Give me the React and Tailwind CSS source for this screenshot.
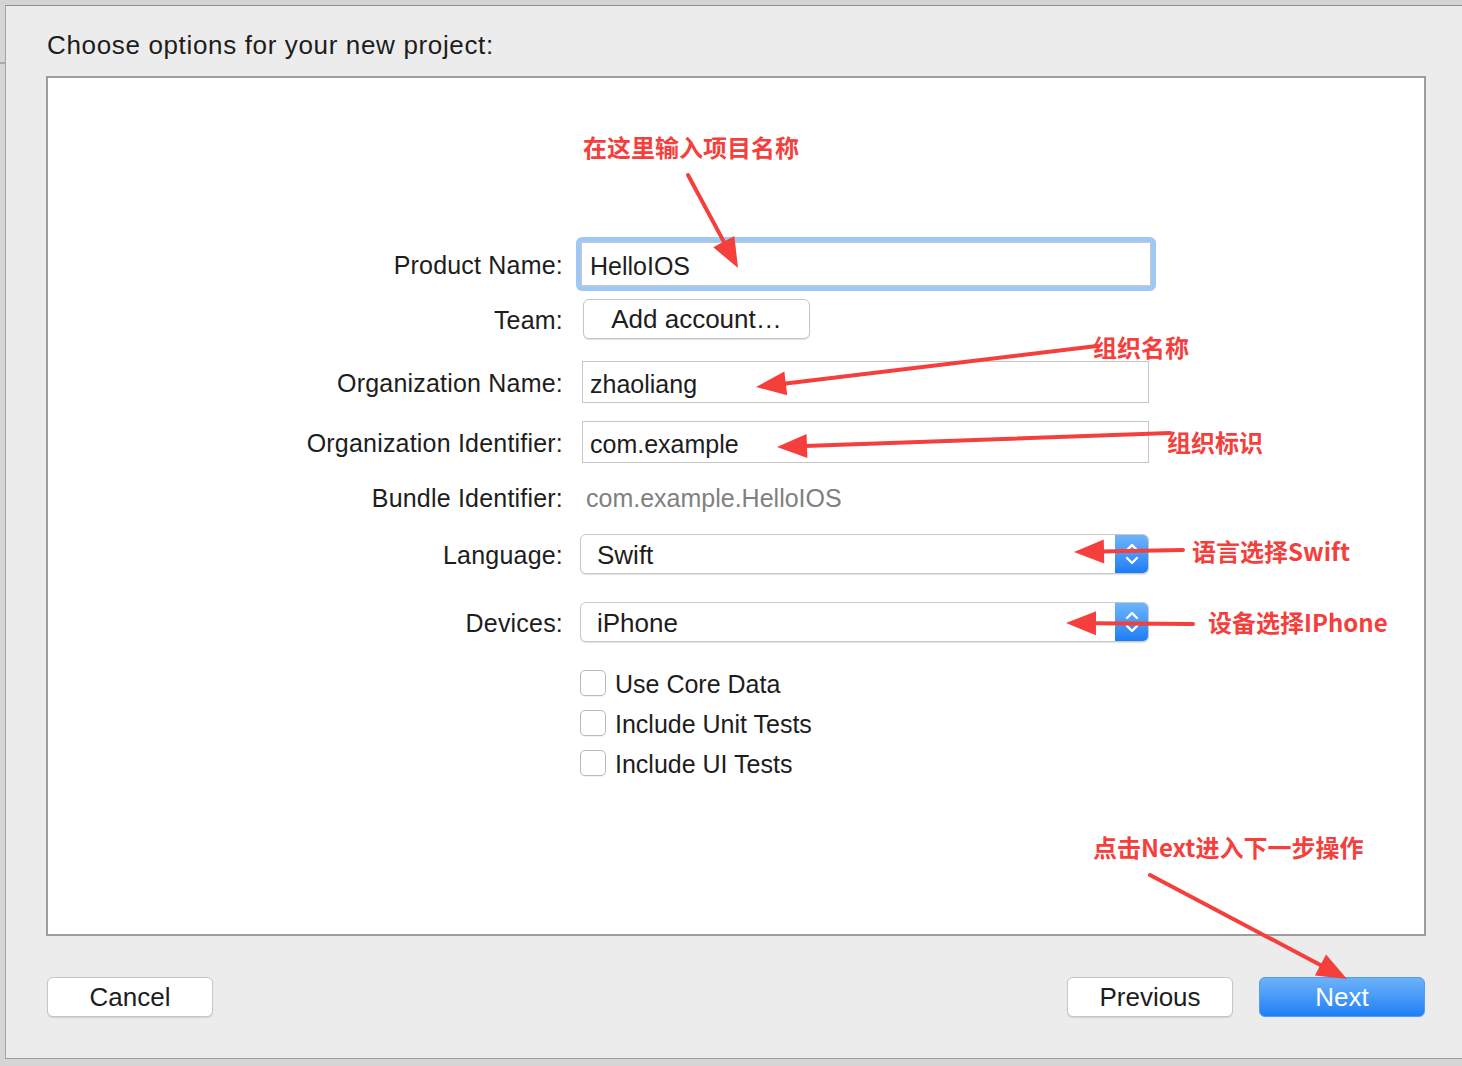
import React from "react"

const SANS = "font-['Liberation_Sans','Helvetica_Neue',Arial,sans-serif]"
const RED = "#f43f3c"

const NOTES = [
  { text: "在这里输入项目名称", left: 583, top: 132 },
  { text: "组织名称", left: 1093, top: 332 },
  { text: "组织标识", left: 1167, top: 427 },
  { text: "语言选择Swift", left: 1192, top: 536 },
  { text: "设备选择IPhone", left: 1208, top: 607 },
  { text: "点击Next进入下一步操作", left: 1093, top: 832 },
]

const ARROWS = [
  [688, 175, 738, 268],
  [1097, 346, 756, 387],
  [1170, 433, 777, 447],
  [1183, 550, 1074, 552],
  [1193, 624, 1066, 623],
  [1150, 875, 1347, 979],
]

function Arrow({ x1, y1, x2, y2 }) {
  const dx = x2 - x1
  const dy = y2 - y1
  const len = Math.hypot(dx, dy)
  const ux = dx / len
  const uy = dy / len
  const hl = 30
  const hw = 12
  const bx = x2 - ux * hl
  const by = y2 - uy * hl
  const pts = `${x2},${y2} ${bx - uy * hw},${by + ux * hw} ${bx + uy * hw},${by - ux * hw}`
  return (
    <g>
      <line x1={x1} y1={y1} x2={bx + ux * 2} y2={by + uy * 2} stroke={RED} strokeWidth="4" strokeLinecap="round" />
      <polygon points={pts} fill={RED} />
    </g>
  )
}

function Label({ children }) {
  return (
    <div className="w-[515px] shrink-0 pt-[2px] text-right text-[25px] leading-[30px] tracking-[0.2px] text-[#1d1d1d]">
      {children}
    </div>
  )
}

function TextField({ value }) {
  return (
    <div className="ml-[19px] flex h-[42px] w-[567px] items-center border border-[#c6c6c6] bg-white px-[7px] pt-[3px] text-[25px] leading-[30px] text-[#1d1d1d]">
      {value}
    </div>
  )
}

function Popup({ value }) {
  return (
    <div className="ml-[17px] flex h-[40px] w-[569px] overflow-hidden rounded-[6px] border border-[#c9c9c9] bg-white shadow-[0_1px_1px_rgba(0,0,0,0.12)]">
      <div className="flex flex-1 items-center pl-[16px] pt-[2px] text-[26px] leading-[30px] text-[#1d1d1d]">{value}</div>
      <div className="flex w-[33px] items-center justify-center bg-gradient-to-b from-[#6db4fb] to-[#1a7df5]">
        <svg width="20" height="32" viewBox="0 0 20 32" fill="none" stroke="white" strokeWidth="2.4" strokeLinecap="round" strokeLinejoin="round">
          <polyline points="5,12 10,7 15,12" />
          <polyline points="5,20 10,25 15,20" />
        </svg>
      </div>
    </div>
  )
}

function Check({ label }) {
  return (
    <div className="flex h-[40px] items-center">
      <div className="ml-[532px] h-[26px] w-[26px] rounded-[5px] border border-[#b8b8b8] bg-white shadow-[0_1px_1px_rgba(0,0,0,0.06)]" />
      <span className="ml-[9px] pt-[1px] text-[25px] leading-[30px] text-[#1d1d1d]">{label}</span>
    </div>
  )
}

function Button({ children, primary }) {
  return (
    <button
      type="button"
      className={
        primary
          ? "flex h-[40px] w-[166px] items-center justify-center rounded-[6px] border border-[#4e9cf5] bg-gradient-to-b from-[#6cb2f9] to-[#1b7ff6] text-[26px] text-white"
          : "flex h-[40px] w-[166px] items-center justify-center rounded-[6px] border border-[#c6c6c6] bg-white text-[26px] text-[#1d1d1d] shadow-[0_1px_1px_rgba(0,0,0,0.12)]"
      }
    >
      {children}
    </button>
  )
}

export default function App() {
  return (
    <div className={`relative h-[1066px] w-[1462px] overflow-hidden bg-[#d6d6d6] ${SANS}`}>
      <div className="h-[5px] bg-[#d4d4d4]" />
      <div className="flex">
        <div className="w-[5px] shrink-0">
          <div className="mt-[57px] h-[2px] bg-[#a9a9a9]" />
        </div>
        <div className="flex h-[1054px] flex-1 flex-col border-l border-t border-b border-l-[#a3a3a3] border-t-[#8d8d8d] border-b-[#9c9c9c] bg-[#ececec]">
          <div className="pl-[41px] pt-[24px] text-[26px] leading-[30px] tracking-[0.65px] text-[#1d1d1d]">
            Choose options for your new project:
          </div>
          <div className="ml-[40px] mt-[16px] h-[860px] w-[1380px] border-2 border-[#9d9d9d] bg-white">
            <div className="mt-[159px] flex items-center">
              <Label>Product Name:</Label>
              <div className="ml-[13px] h-[54px] w-[580px] rounded-[6px] bg-[#9fc8f6] p-[5px]">
                <div className="flex h-full items-center border border-[#c8c8c8] bg-white px-[8px] pt-[3px] text-[25px] leading-[30px] text-[#1d1d1d]">
                  HelloIOS
                </div>
              </div>
            </div>
            <div className="mt-[8px] flex items-center">
              <Label>Team:</Label>
              <button
                type="button"
                className="ml-[20px] flex h-[40px] w-[227px] items-center justify-center rounded-[6px] border border-[#c6c6c6] bg-white text-[26px] text-[#1d1d1d] shadow-[0_1px_1px_rgba(0,0,0,0.12)]"
              >
                Add account…
              </button>
            </div>
            <div className="mt-[22px] flex items-center">
              <Label>Organization Name:</Label>
              <TextField value="zhaoliang" />
            </div>
            <div className="mt-[18px] flex items-center">
              <Label>Organization Identifier:</Label>
              <TextField value="com.example" />
            </div>
            <div className="mt-[19px] flex h-[30px] items-center">
              <Label>Bundle Identifier:</Label>
              <span className="ml-[23px] pt-[2px] text-[25px] leading-[30px] text-[#808080]">com.example.HelloIOS</span>
            </div>
            <div className="mt-[22px] flex items-center">
              <Label>Language:</Label>
              <Popup value="Swift" />
            </div>
            <div className="mt-[28px] flex items-center">
              <Label>Devices:</Label>
              <Popup value="iPhone" />
            </div>
            <div className="mt-[21px] flex flex-col">
              <Check label="Use Core Data" />
              <Check label="Include Unit Tests" />
              <Check label="Include UI Tests" />
            </div>
          </div>
          <div className="mt-[41px] flex items-center pl-[41px] pr-[37px]">
            <Button>Cancel</Button>
            <div className="flex-1" />
            <Button>Previous</Button>
            <div className="w-[26px]" />
            <Button primary>Next</Button>
          </div>
        </div>
      </div>

      <svg className="pointer-events-none absolute left-0 top-0" width="1462" height="1066">
        {ARROWS.map(([x1, y1, x2, y2], i) => (
          <Arrow key={i} x1={x1} y1={y1} x2={x2} y2={y2} />
        ))}
      </svg>
      {NOTES.map((n) => (
        <div
          key={n.text}
          className="absolute whitespace-nowrap font-['Noto_Sans_CJK_SC',sans-serif] text-[24px] font-bold leading-[30px] text-[#f43f3c]"
          style={{ left: n.left, top: n.top }}
        >
          {n.text}
        </div>
      ))}
    </div>
  )
}
